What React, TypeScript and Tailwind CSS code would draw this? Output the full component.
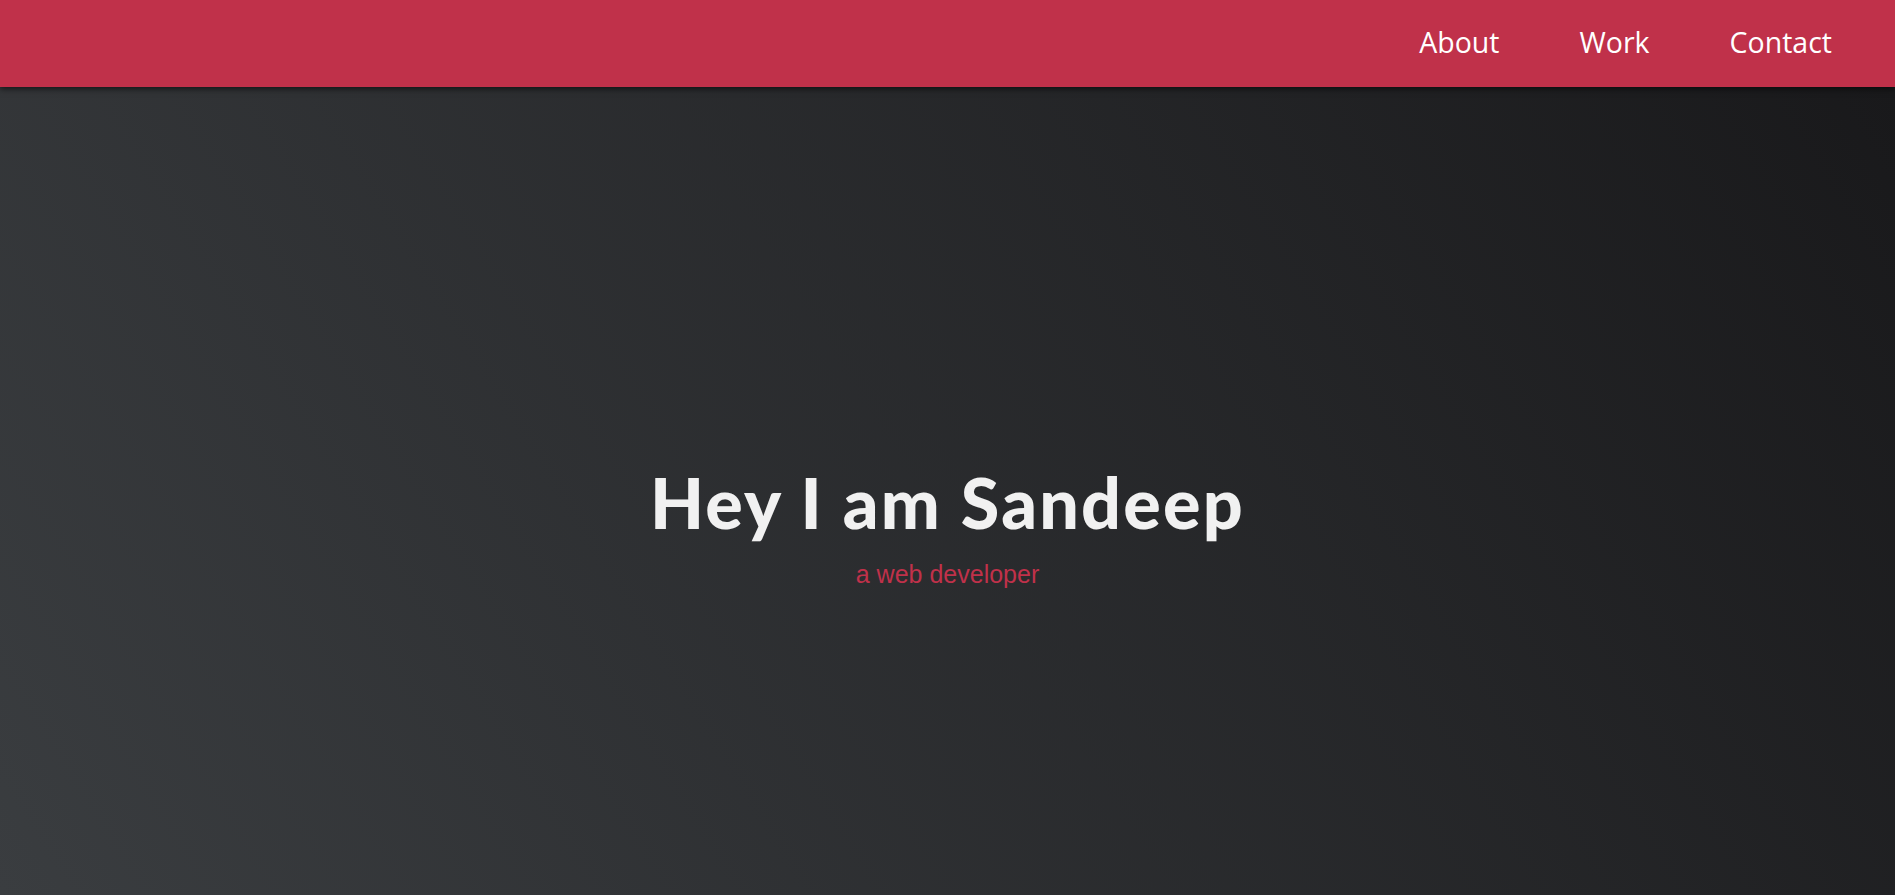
export default function App() {
  const links = ['About', 'Work', 'Contact']

  return (
    <div className="flex h-[895px] w-[1895px] flex-col overflow-hidden">
      {/* Header */}
      <header className="relative z-10 flex h-[87px] shrink-0 items-center justify-end bg-[#c0314a] pr-[63px] shadow-[0_2px_6px_rgba(0,0,0,0.6)]">
        <nav className="flex gap-[80px] pb-[2px] font-['Open_Sans',sans-serif] text-[28.5px] text-white">
          {links.map((link) => (
            <a key={link} href="#" className="leading-none">
              {link}
            </a>
          ))}
        </nav>
      </header>

      {/* Hero */}
      <main className="flex flex-1 flex-col items-center justify-center bg-[linear-gradient(58deg,#3a3d40,#19191b)] pt-[78px]">
        <h1 className="font-['Lato',sans-serif] text-[70px] leading-none font-black tracking-[2.2px] text-[#f1f1f1]">
          Hey I am Sandeep
        </h1>
        <p className="mt-[19px] font-['Liberation_Sans',Arial,sans-serif] text-[25px] text-[#c0314a]">
          a web developer
        </p>
      </main>
    </div>
  )
}
